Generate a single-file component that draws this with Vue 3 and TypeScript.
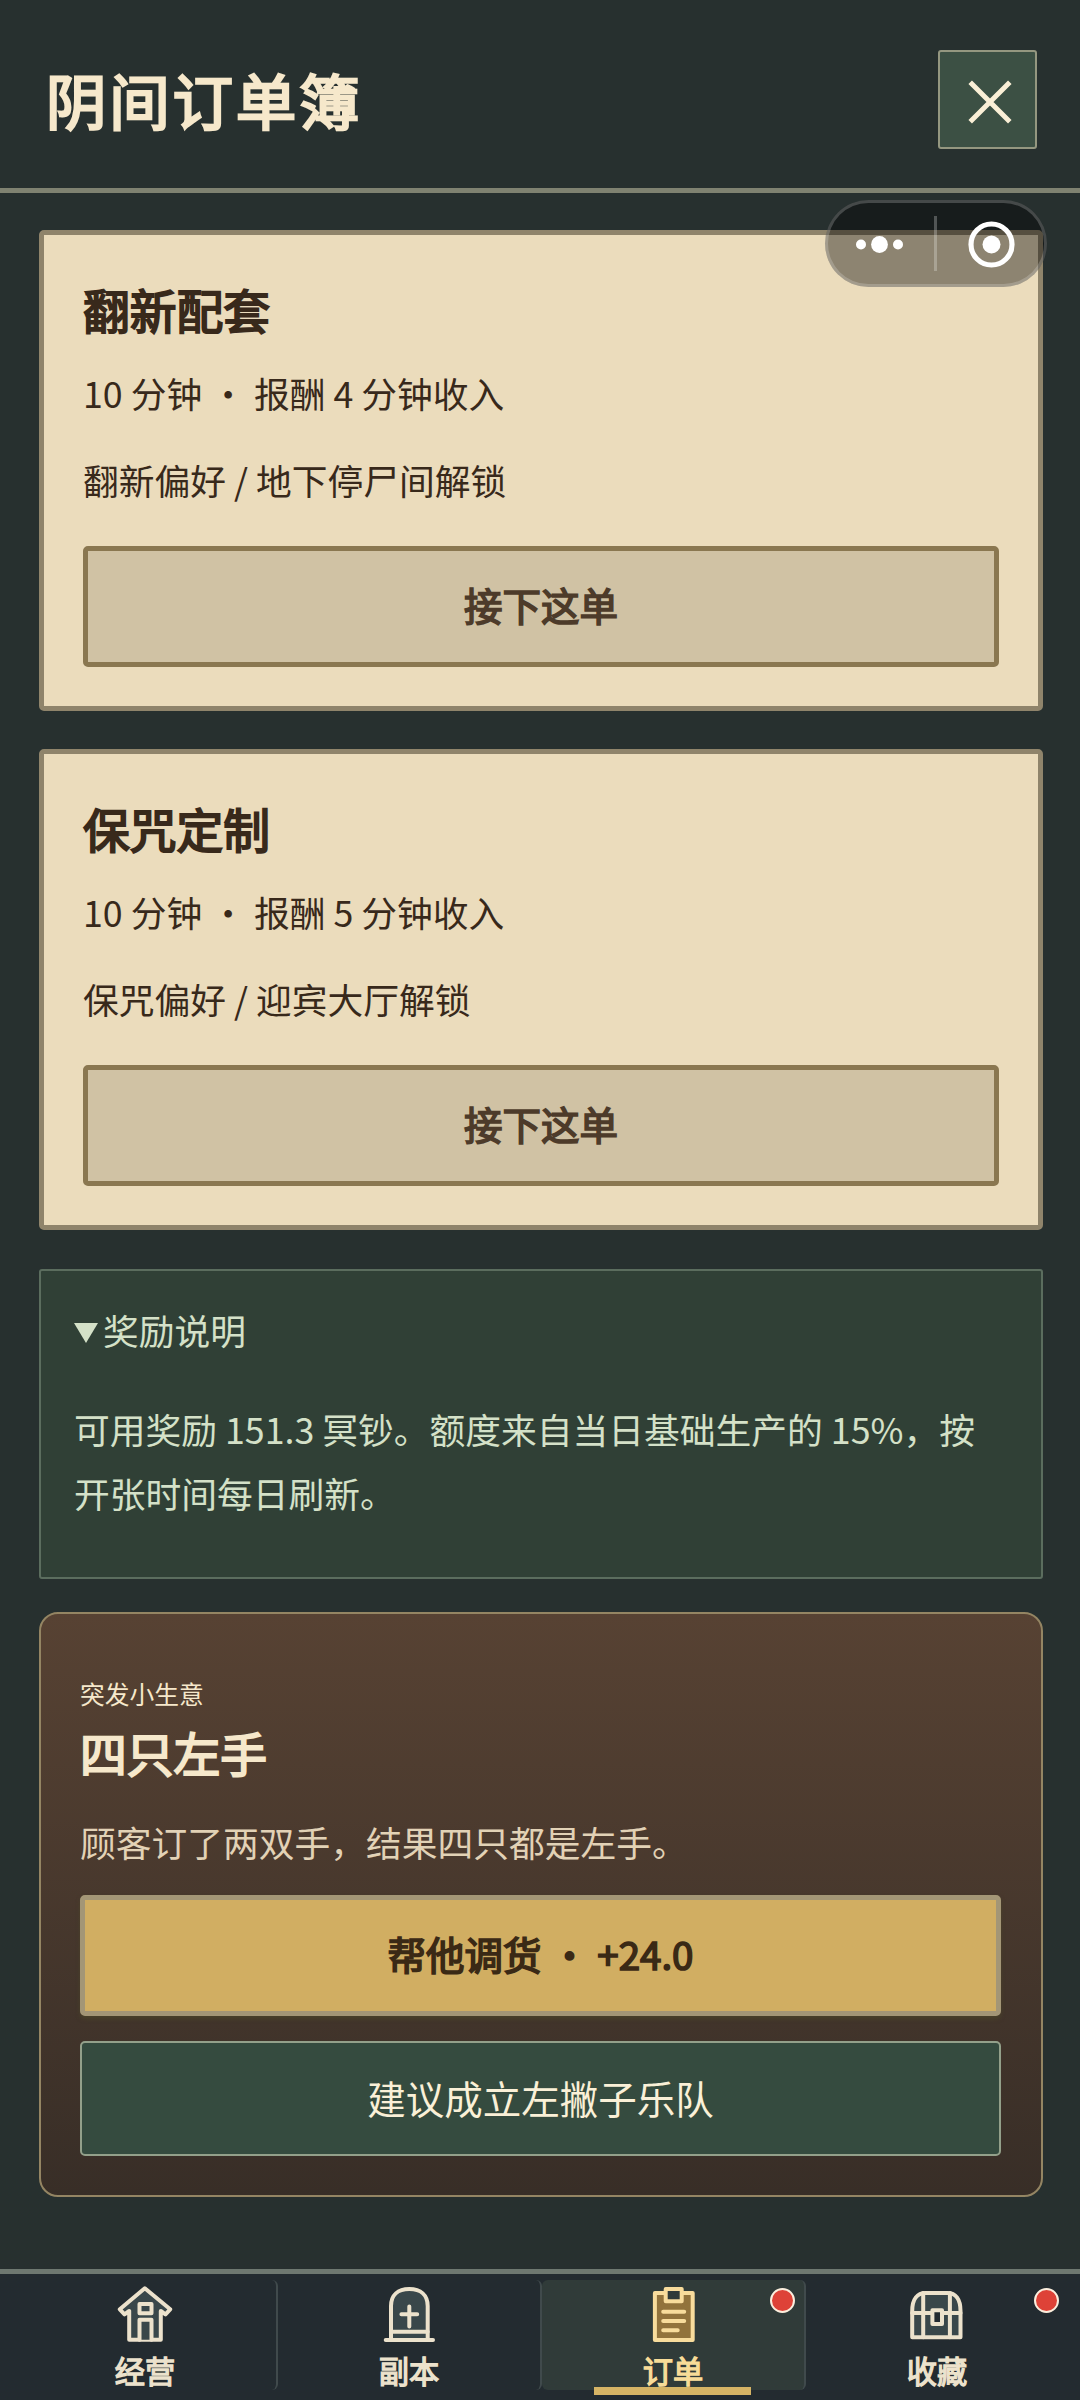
<script setup lang="ts">
import { ref } from 'vue'

interface Order {
  title: string
  reward: string
  note: string
}

interface Tab {
  key: 'shop' | 'dungeon' | 'orders' | 'collection'
  label: string
  badge: boolean
}

const orders: Order[] = [
  { title: '翻新配套', reward: '10 分钟 · 报酬 4 分钟收入', note: '翻新偏好 / 地下停尸间解锁' },
  { title: '保咒定制', reward: '10 分钟 · 报酬 5 分钟收入', note: '保咒偏好 / 迎宾大厅解锁' },
]

const tabs: Tab[] = [
  { key: 'shop', label: '经营', badge: false },
  { key: 'dungeon', label: '副本', badge: false },
  { key: 'orders', label: '订单', badge: true },
  { key: 'collection', label: '收藏', badge: true },
]

const active = ref<Tab['key']>('orders')
</script>

<template>
  <div class="screen">
    <header class="header">
      <h1>阴间订单簿</h1>
      <button class="close" aria-label="关闭">
        <svg width="44" height="44" viewBox="0 0 44 44">
          <path d="M2.2 2.2 41.8 41.8M41.8 2.2 2.2 41.8" stroke="#faefd6" stroke-width="5" />
        </svg>
      </button>
    </header>

    <div class="capsule">
      <svg width="222" height="87" viewBox="0 0 222 87">
        <rect x="109" y="16" width="3" height="55" fill="#fff" fill-opacity=".25" />
        <g fill="#fff">
          <circle cx="36" cy="44.5" r="5" />
          <circle cx="54.5" cy="44.5" r="8.4" />
          <circle cx="73" cy="44.5" r="5" />
          <circle cx="166.5" cy="44.5" r="9" />
        </g>
        <circle cx="166.5" cy="44.5" r="20.5" fill="none" stroke="#fff" stroke-width="5.2" />
      </svg>
    </div>

    <main class="content">
      <article v-for="order in orders" :key="order.title" class="order">
        <h2>{{ order.title }}</h2>
        <p class="reward">{{ order.reward }}</p>
        <p class="note">{{ order.note }}</p>
        <button class="accept">接下这单</button>
      </article>

      <section class="info">
        <div class="summary">
          <svg width="24" height="20" viewBox="0 0 24 20"><path d="M0 0H24L12 20Z" fill="#d4e1c8" /></svg>
          <span>奖励说明</span>
        </div>
        <p>可用奖励 151.3 冥钞。额度来自当日基础生产的 15%，按开张时间每日刷新。</p>
      </section>

      <section class="event">
        <small>突发小生意</small>
        <h2>四只左手</h2>
        <p>顾客订了两双手，结果四只都是左手。</p>
        <button class="primary">帮他调货 · +24.0</button>
        <button class="secondary">建议成立左撇子乐队</button>
      </section>
    </main>

    <nav class="nav">
      <button
        v-for="tab in tabs"
        :key="tab.key"
        class="tab"
        :class="{ active: tab.key === active }"
        @click="active = tab.key"
      >
        <svg class="icon" width="60" height="60" viewBox="0 0 60 60">
          <g v-if="tab.key === 'shop'">
            <path d="M29.8 4.3 4.8 25.3 9.5 30.3 14.2 27V55.7H45.8V27L50.5 30.3 55.2 25.3Z" />
            <path d="M24.5 20H36.5V29.3H24.5ZM24.5 55.7V35.7H36.5V55.7" />
          </g>
          <g v-else-if="tab.key === 'dungeon'">
            <path d="M12 56V22C12 11 19 5 30.3 5S48.7 11 48.7 22V56" />
            <path d="M6.7 56H54M12 47.7H48.7M30.3 22.6V42.4M22.4 30.3H38.2" />
          </g>
          <g v-else-if="tab.key === 'orders'">
            <path d="M11.9 9H49.7V56H11.9Z" />
            <path class="hole" d="M22.7 5H38.7V17.3H22.7Z" />
            <path d="M20.2 27.7H41.2M20.2 37H41.2M20.2 46.3H34.7" />
          </g>
          <g v-else>
            <path d="M5.2 53.3V27C5.2 15 10.5 9 18.5 9H40.5C48.5 9 53.5 15 53.5 27V53.3Z" />
            <path d="M5.2 29H53.5M16.2 9V53.3M42.9 9V53.3" />
            <path class="hole" d="M25.4 26.2H35V40H25.4Z" />
          </g>
        </svg>
        <span>{{ tab.label }}</span>
        <i v-if="tab.badge" class="badge"></i>
      </button>
    </nav>
  </div>
</template>

<style>
body {
  background: #27302f;
}
</style>

<style scoped>
* {
  box-sizing: border-box;
  margin: 0;
}

.screen {
  position: relative;
  display: flex;
  flex-direction: column;
  width: 1080px;
  height: 2400px;
  overflow: hidden;
  background: #27302f;
  font-family: 'Noto Sans CJK SC', sans-serif;
  font-size: 35.75px;
}

button {
  display: block;
  padding: 0;
  font-family: inherit;
}

svg {
  display: block;
}

/* Headings and strong labels share the regular advance widths, thickened by an outline. */
h1,
h2,
.accept,
.primary,
.tab span {
  font-weight: 400;
  -webkit-text-stroke: 0.043em currentColor;
}

.header {
  display: flex;
  align-items: center;
  justify-content: space-between;
  height: 193px;
  flex: none;
  padding: 11px 43px 0 45px;
  border-bottom: 5px solid #7f8271;
}

.header h1 {
  padding: 0 0 2px 1px;
  color: #f6e8cb;
  font-size: 60.5px;
  letter-spacing: 2.75px;
}

.close {
  width: 99px;
  height: 99px;
  padding: 5px 0 0 5px;
  display: flex;
  align-items: center;
  justify-content: center;
  border: 2px solid #949780;
  border-radius: 3px;
  background: #3c5044;
}

.capsule {
  position: absolute;
  z-index: 2;
  top: 200px;
  left: 825px;
  width: 222px;
  height: 87px;
  border-radius: 44px;
  background: rgba(0, 0, 0, 0.4);
  box-shadow: inset 0 0 0 3px rgba(255, 255, 255, 0.2);
}

.content {
  display: flex;
  flex-direction: column;
  flex: 1;
  padding: 37px 37px 0 39px;
}

.order {
  height: 481px;
  margin-bottom: 38px;
  padding: 36px 39px 39px;
  border: 5px solid #8f846b;
  border-radius: 5px;
  background: #ebdcbc;
  color: #38291b;
}

.order:nth-child(2) {
  margin-bottom: 39px;
}

h2 {
  font-size: 46.75px;
  line-height: 75px;
}

.order p {
  line-height: 57px;
}

.reward {
  margin-top: 18px;
}

.note {
  margin-top: 30px;
}

.accept {
  width: 916px;
  height: 121px;
  margin-top: 38px;
  padding-bottom: 6px;
  border: 5px solid #8a7750;
  border-radius: 5px;
  background: #d0c2a4;
  color: #4d3b2a;
  font-size: 38.5px;
}

.info {
  height: 310px;
  margin-bottom: 33px;
  padding: 33px;
  border: 2px solid #5b6d5e;
  border-radius: 3px;
  background: #304036;
  color: #d4e1c8;
}

.summary {
  display: flex;
  align-items: center;
  gap: 5px;
  height: 57px;
}

.summary span {
  padding-bottom: 7px;
}

.info p {
  margin-top: 36px;
  line-height: 64px;
}

.event {
  height: 585px;
  padding: 59px 40px 0 39px;
  border: 2px solid #948563;
  border-radius: 19px;
  background: linear-gradient(180deg, #574233, #382e27);
}

.event small {
  display: block;
  color: #f6e8cb;
  font-size: 24.75px;
  line-height: 40px;
}

.event h2 {
  margin-top: 1px;
  color: #f6e8cb;
}

.event p {
  margin-top: 24px;
  color: #e2d2b6;
  line-height: 57px;
}

.primary,
.secondary {
  width: 921px;
  padding-bottom: 4px;
  border-radius: 5px;
  font-size: 38.5px;
}

.primary {
  height: 121px;
  margin-top: 25px;
  padding-bottom: 6px;
  border: 5px solid #a39676;
  background: #d1ae62;
  box-shadow: 0 3px 4px rgba(77, 74, 40, 0.6);
  color: #3a2915;
}

.secondary {
  height: 115px;
  margin-top: 25px;
  border: 2px solid #93a08a;
  background: #354b3f;
  color: #faf0d7;
}

.nav {
  display: flex;
  flex: none;
  height: 131px;
  padding: 6px 10px 0 14px;
  border-top: 5px solid #6e7870;
  background: #232b30;
}

.tab {
  position: relative;
  display: flex;
  flex: 1;
  flex-direction: column;
  align-items: center;
  height: 110px;
  padding-top: 4px;
  border: 0 solid #404a4c;
  border-right-width: 2px;
  border-radius: 6px;
  background: none;
  color: #ece2cc;
  font-size: 30.25px;
}

.tab:last-child {
  border-color: transparent;
}

.tab span {
  line-height: 36px;
  margin-top: 8px;
}

.tab.active {
  background: #303b39;
  border-color: #404a4c;
  color: #f8dc98;
}

.tab.active::after {
  content: '';
  position: absolute;
  bottom: -5px;
  left: 52px;
  width: 157px;
  height: 8px;
  background: #d6b465;
}

.icon {
  fill: #39474a;
  stroke: #ece2cc;
  stroke-width: 4;
  stroke-linecap: round;
  stroke-linejoin: round;
}

.icon .hole {
  fill: #232b30;
}

.active .icon {
  fill: #92733c;
  stroke: #f8dc9c;
}

.active .icon .hole {
  fill: #303b39;
}

.badge {
  position: absolute;
  top: 8px;
  right: 9px;
  width: 25px;
  height: 25px;
  border: 2px solid #fbeedd;
  border-radius: 50%;
  background: #de4237;
}
</style>
